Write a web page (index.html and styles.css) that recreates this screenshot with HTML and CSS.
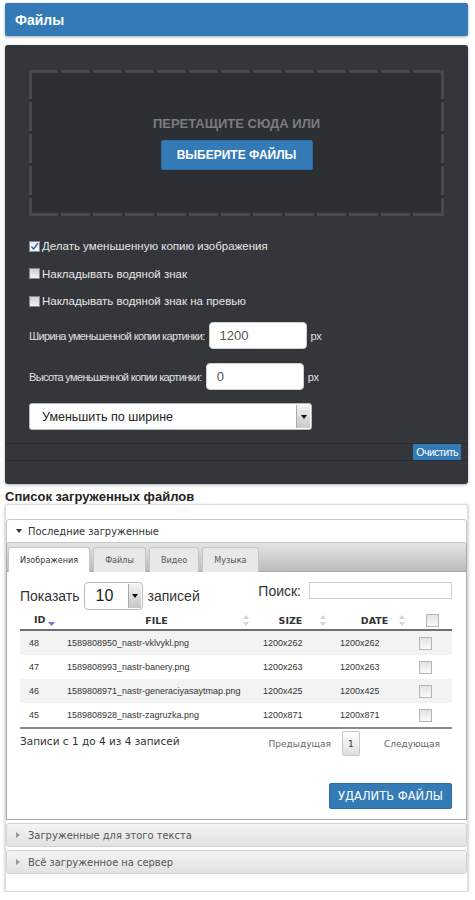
FILE: index.html
```html
<!DOCTYPE html>
<html lang="ru">
<head>
<meta charset="utf-8">
<title>Файлы</title>
<link rel="stylesheet" href="styles.css">
</head>
<body>
<div class="page">
  <div class="topbar">Файлы</div>

  <div class="panel">
    <div class="drop">
      <div class="drop-text">ПЕРЕТАЩИТЕ СЮДА ИЛИ</div>
      <button class="btn-pick">ВЫБЕРИТЕ ФАЙЛЫ</button>
    </div>

    <div class="opts">
      <label class="opt"><span class="cb checked"><svg viewBox="0 0 10 10" width="9" height="9"><path d="M1.5 5 L4 7.8 L8.8 1.5" fill="none" stroke="#3b66c4" stroke-width="1.8"/></svg></span>Делать уменьшенную копию изображения</label>
      <label class="opt"><span class="cb"></span>Накладывать водяной знак</label>
      <label class="opt"><span class="cb"></span>Накладывать водяной знак на превью</label>
    </div>

    <div class="field f1">
      <span class="flabel">Ширина уменьшенной копии картинки:</span>
      <input class="inp" type="text" value="1200">
      <span class="px">px</span>
    </div>
    <div class="field f2">
      <span class="flabel">Высота уменьшенной копии картинки:</span>
      <input class="inp" type="text" value="0">
      <span class="px">px</span>
    </div>

    <div class="sel-big">
      <span class="sel-text">Уменьшить по ширине</span>
      <span class="sel-arrow"><svg viewBox="0 0 6 4" width="6" height="4"><path d="M0 0 H6 L3 4 Z" fill="#111"/></svg></span>
    </div>

    <div class="strip"><button class="btn-clear">Очистить</button></div>
  </div>

  <div class="list-title">Список загруженных файлов</div>

  <div class="box">
    <div class="acc-head open"><span class="tri"><svg viewBox="0 0 6 4" width="6" height="4"><path d="M0 0 H6 L3 4 Z" fill="#333"/></svg></span>Последние загруженные</div>
    <div class="tabs">
      <div class="tabbar">
        <div class="tab active">Изображения</div>
        <div class="tab">Файлы</div>
        <div class="tab">Видео</div>
        <div class="tab">Музыка</div>
      </div>
      <div class="tab-body">
        <div class="controls">
          <div class="len">
            <span>Показать</span>
            <span class="sel-small"><span class="ss-text">10</span><span class="ss-arrow"><svg viewBox="0 0 6 4" width="6" height="4"><path d="M0 0 H6 L3 4 Z" fill="#111"/></svg></span></span>
            <span>записей</span>
          </div>
          <div class="search">
            <span>Поиск:</span>
            <input class="search-inp" type="text">
          </div>
        </div>

        <table class="grid">
          <colgroup><col class="c1"><col class="c2"><col class="c3"><col class="c4"><col class="c5"></colgroup>
          <thead>
            <tr>
              <th class="th-id">ID<svg class="sort-desc" viewBox="0 0 7 4" width="7" height="4"><path d="M0 0 H7 L3.5 4 Z" fill="#6f73d8"/></svg></th>
              <th><div class="th-in pl-file"><span class="lbl">FILE</span><svg class="sort" viewBox="0 0 6 11" width="6" height="11"><path d="M0 4 L3 0 L6 4 Z M0 7 L3 11 L6 7 Z" fill="#d6d6d6"/></svg></div></th>
              <th><div class="th-in pl-size"><span class="lbl">SIZE</span><svg class="sort" viewBox="0 0 6 11" width="6" height="11"><path d="M0 4 L3 0 L6 4 Z M0 7 L3 11 L6 7 Z" fill="#d6d6d6"/></svg></div></th>
              <th><div class="th-in pl-date"><span class="lbl">DATE</span><svg class="sort" viewBox="0 0 6 11" width="6" height="11"><path d="M0 4 L3 0 L6 4 Z M0 7 L3 11 L6 7 Z" fill="#d6d6d6"/></svg></div></th>
              <th class="th-cb"><span class="tcb"></span></th>
            </tr>
          </thead>
          <tbody>
            <tr class="odd"><td class="td-id">48</td><td class="td-file">1589808950_nastr-vklvykl.png</td><td class="td-n">1200x262</td><td class="td-n">1200x262</td><td class="td-cb"><span class="tcb"></span></td></tr>
            <tr><td class="td-id">47</td><td class="td-file">1589808993_nastr-banery.png</td><td class="td-n">1200x263</td><td class="td-n">1200x263</td><td class="td-cb"><span class="tcb"></span></td></tr>
            <tr class="odd"><td class="td-id">46</td><td class="td-file">1589808971_nastr-generaciyasaytmap.png</td><td class="td-n">1200x425</td><td class="td-n">1200x425</td><td class="td-cb"><span class="tcb"></span></td></tr>
            <tr><td class="td-id">45</td><td class="td-file">1589808928_nastr-zagruzka.png</td><td class="td-n">1200x871</td><td class="td-n">1200x871</td><td class="td-cb"><span class="tcb"></span></td></tr>
          </tbody>
        </table>

        <div class="tfoot">
          <div class="info">Записи с 1 до 4 из 4 записей</div>
          <div class="pager">
            <span class="pg prev">Предыдущая</span>
            <span class="pg-num">1</span>
            <span class="pg next">Следующая</span>
          </div>
        </div>

        <div class="del-row"><button class="btn-del">УДАЛИТЬ ФАЙЛЫ</button></div>
      </div>
    </div>

    <div class="acc-head closed"><span class="tri"><svg viewBox="0 0 4 6" width="4" height="6"><path d="M0 0 V6 L4 3 Z" fill="#999"/></svg></span>Загруженные для этого текста</div>
    <div class="acc-head closed"><span class="tri"><svg viewBox="0 0 4 6" width="4" height="6"><path d="M0 0 V6 L4 3 Z" fill="#999"/></svg></span>Всё загруженное на сервер</div>
  </div>
</div>
</body>
</html>
```

FILE: styles.css
```css
body {
  margin: 0;
  background: #fff;
  font-family: "Liberation Sans", Arial, sans-serif;
}

.page {
  padding: 3px 7px 0 5px;
}

.topbar {
  height: 33px;
  background: #337ab7;
  border-radius: 2px;
  box-shadow: 0 1px 3px rgba(0, 0, 0, 0.35);
  display: flex;
  align-items: center;
  padding-left: 10px;
  color: #fff;
  font-weight: bold;
  font-size: 14px;
}

.panel {
  margin-top: 9px;
  height: 439px;
  box-sizing: border-box;
  background: #33363a;
  border-radius: 3px;
  padding: 25px 24px 0;
  box-shadow: 0 1px 3px rgba(0, 0, 0, 0.3);
}

.drop {
  height: 146px;
  display: flex;
  flex-direction: column;
  align-items: center;
  justify-content: center;
  gap: 8px;
  background:
    repeating-linear-gradient(90deg, #46494d 0 29px, transparent 29px 32px) left top / 100% 3px no-repeat,
    repeating-linear-gradient(90deg, #46494d 0 29px, transparent 29px 32px) left bottom / 100% 3px no-repeat,
    repeating-linear-gradient(180deg, #46494d 0 29px, transparent 29px 32px) left top / 3px 100% no-repeat,
    repeating-linear-gradient(180deg, #46494d 0 29px, transparent 29px 32px) right top / 3px 100% no-repeat,
    #2c2f33;
}

.drop-text {
  font-weight: bold;
  font-size: 13px;
  line-height: 16px;
  color: #7a7d81;
}

.btn-pick {
  width: 152px;
  height: 30px;
  background: #337ab7;
  border: 1px solid #2e6da4;
  border-radius: 2px;
  color: #fff;
  font-family: inherit;
  font-weight: bold;
  font-size: 12px;
  padding: 0;
}

.opts {
  margin-top: 22px;
  display: flex;
  flex-direction: column;
  gap: 11.5px;
}

.opt {
  display: flex;
  align-items: center;
  height: 16px;
  font-size: 11.5px;
  color: #e8e8e8;
  gap: 2px;
}

.cb {
  width: 11px;
  height: 11px;
  box-sizing: border-box;
  border: 1px solid #8a8a8a;
  background: linear-gradient(#cfcfcf, #f2f2f2);
  display: flex;
  align-items: center;
  justify-content: center;
}

.cb.checked {
  background: linear-gradient(#e8e8e8, #ffffff);
}

.field {
  display: flex;
  align-items: center;
  color: #e0e0e0;
}

.f1 { margin-top: 13px; }
.f2 { margin-top: 14px; }

.flabel {
  font-size: 11px;
  letter-spacing: -0.65px;
}

.inp {
  width: 98px;
  height: 27px;
  box-sizing: border-box;
  border: 1px solid #d0d0d0;
  border-radius: 4px;
  margin: 0 4px;
  padding: 0 0 0 10px;
  font-family: inherit;
  font-size: 13px;
  color: #555;
  background: #fff;
}

.px {
  font-size: 11px;
  letter-spacing: -0.4px;
}

.sel-big {
  margin-top: 13px;
  width: 283px;
  height: 27px;
  box-sizing: border-box;
  background: #fff;
  border: 1px solid #bbb;
  border-radius: 3px;
  display: flex;
}

.sel-text {
  flex: 1;
  display: flex;
  align-items: center;
  padding-left: 12px;
  font-size: 12.5px;
  color: #222;
}

.sel-arrow {
  width: 13px;
  margin: 1px;
  border-left: 1px solid #aaa;
  background: linear-gradient(#f2f2f2, #c9c9c9);
  display: flex;
  align-items: center;
  justify-content: center;
}

.strip {
  margin: 13px -24px 0;
  height: 16px;
  border-top: 1px solid #2a2c2f;
  border-bottom: 1px solid #2a2c2f;
  display: flex;
  justify-content: flex-end;
  padding-right: 7px;
}

.btn-clear {
  height: 16px;
  padding: 0 3px;
  border: 0;
  background: #337ab7;
  color: #fff;
  font-family: inherit;
  font-size: 10.5px;
  letter-spacing: -0.5px;
}

.list-title {
  margin-top: 5px;
  font-size: 13px;
  line-height: 16px;
  font-weight: bold;
  color: #222;
}

.box {
  margin-top: -1px;
  background: #fff;
  border: 1px solid #ddd;
  border-radius: 2px;
  box-shadow: 0 1px 3px rgba(0, 0, 0, 0.3);
  padding: 14px 0 17px;
}

.acc-head {
  height: 24px;
  box-sizing: border-box;
  border: 1px solid #c8c8c8;
  border-radius: 3px;
  display: flex;
  align-items: center;
  padding-left: 9px;
  font-family: "DejaVu Sans Condensed", "DejaVu Sans", Verdana, sans-serif;
  font-size: 11px;
  color: #333;
}

.acc-head.open {
  border-radius: 3px 3px 0 0;
  background: #fff;
}

.acc-head.closed {
  margin-top: 3px;
  background: linear-gradient(#f4f4f4, #e2e2e2);
  border-color: #d3d3d3;
  color: #555;
}

.tri {
  width: 12px;
  display: flex;
  align-items: center;
}

.tabs {
  border: 1px solid #aaa;
  border-top: 0;
}

.tabbar {
  height: 29px;
  box-sizing: border-box;
  background: linear-gradient(#e4e4e4, #bcbcbc);
  border-bottom: 1px solid #aaa;
  display: flex;
  align-items: flex-end;
  gap: 3px;
  padding-left: 1px;
}

.tab {
  height: 25px;
  box-sizing: border-box;
  margin-bottom: -1px;
  padding: 0 11px;
  border: 1px solid #c5c5c5;
  border-bottom: 0;
  border-radius: 3px 3px 0 0;
  background: #e8e8e8;
  display: flex;
  align-items: center;
  font-family: "DejaVu Sans Condensed", "DejaVu Sans", Verdana, sans-serif;
  font-size: 9px;
  color: #555;
}

.tab.active {
  background: #fff;
  color: #333;
}

.tab-body {
  padding: 10px 14px 10px 13px;
}

.controls {
  display: flex;
  justify-content: space-between;
  align-items: flex-start;
  font-size: 14px;
  color: #333;
}

.len {
  display: flex;
  align-items: center;
}

.sel-small {
  width: 59px;
  height: 28px;
  box-sizing: border-box;
  margin: 0 5px 0 4px;
  border: 1px solid #bbb;
  border-radius: 4px;
  display: flex;
}

.ss-text {
  flex: 1;
  display: flex;
  align-items: center;
  padding-left: 11px;
  font-size: 16px;
  color: #222;
}

.ss-arrow {
  width: 12px;
  margin: 1px;
  border-left: 1px solid #aaa;
  background: linear-gradient(#f4f4f4, #c6c6c6);
  display: flex;
  align-items: center;
  justify-content: center;
}

.search {
  display: flex;
  align-items: center;
  gap: 8px;
  height: 17px;
}

.search-inp {
  width: 143px;
  height: 17px;
  box-sizing: border-box;
  border: 1px solid #d0d0d0;
  padding: 0;
}

.grid {
  width: 432px;
  border-collapse: collapse;
  table-layout: fixed;
  margin-top: 1px;
}

.c1 { width: 40px; }
.c2 { width: 195px; }
.c3 { width: 77px; }
.c4 { width: 79px; }
.c5 { width: 41px; }

.grid th {
  height: 18px;
  padding: 0;
  border-bottom: 2px solid #707070;
  font-family: "DejaVu Sans", Verdana, sans-serif;
  font-size: 9.5px;
  font-weight: bold;
  color: #333;
  vertical-align: middle;
}

.th-id {
  text-align: left;
  padding-left: 14px !important;
}

.sort-desc {
  margin-left: 3px;
  vertical-align: -3px;
}

.th-in {
  display: flex;
  align-items: center;
}

.th-in .lbl {
  flex: 1;
  text-align: center;
}

.th-in .sort {
  margin-right: 6px;
}

.pl-file { padding-left: 10px; }
.pl-size { padding-left: 6px; }
.pl-date { padding-left: 18px; }

.th-cb {
  text-align: left;
  padding-left: 15px !important;
}

.tcb {
  display: block;
  width: 11px;
  height: 11px;
  border: 1px solid #b5b5b5;
  background: linear-gradient(#e2e2e2, #fafafa);
}

.grid td {
  height: 24px;
  padding: 0;
  font-size: 9px;
  color: #333;
}

.grid tr.odd td {
  background: #f3f3f3;
}

.td-id { padding-left: 9px !important; }
.td-file { padding-left: 7px !important; white-space: nowrap; }
.td-n { padding-left: 8px !important; }
.td-cb { padding-left: 8px !important; }

.grid tbody tr:last-child td {
  border-bottom: 2px solid #8a8a8a;
}

.tfoot {
  margin-top: 2px;
  display: flex;
  justify-content: space-between;
  align-items: flex-start;
}

.info {
  padding-top: 4px;
  font-family: "DejaVu Sans", Verdana, sans-serif;
  font-size: 10.5px;
  color: #333;
}

.pager {
  display: flex;
  align-items: center;
  margin-right: 12px;
  font-family: "DejaVu Sans", Verdana, sans-serif;
  font-size: 9px;
  color: #666;
}

.pg.prev { margin-right: 11px; }
.pg.next { margin-left: 24px; }

.pg-num {
  width: 18px;
  height: 25px;
  box-sizing: border-box;
  border: 1px solid #c8c8c8;
  border-radius: 2px;
  background: linear-gradient(#ffffff, #dedede);
  display: flex;
  align-items: center;
  justify-content: center;
  color: #333;
}

.del-row {
  margin-top: 27px;
  display: flex;
  justify-content: flex-end;
}

.btn-del {
  width: 123px;
  height: 26px;
  border: 1px solid #2e6da4;
  border-radius: 2px;
  background: #337ab7;
  color: #fff;
  font-family: "DejaVu Sans", Verdana, sans-serif;
  font-size: 11.5px;
  padding: 0;
}
```
